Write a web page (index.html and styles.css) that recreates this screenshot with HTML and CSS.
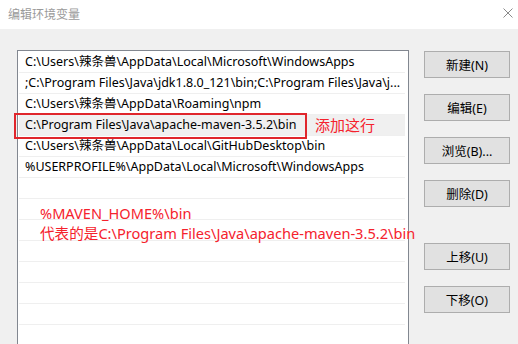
FILE: index.html
```html
<!DOCTYPE html>
<html lang="zh-CN">
<head>
  <meta charset="UTF-8">
  <title>编辑环境变量</title>
  <link rel="stylesheet" href="styles.css">
</head>
<body>
  <div class="titlebar">
    <span class="title">编辑环境变量</span>
    <svg class="close" width="10" height="10" viewBox="0 0 10 10">
      <path d="M0.5 0.5 L9.5 9.5 M9.5 0.5 L0.5 9.5" stroke="#8a8a8a" stroke-width="1" fill="none"/>
    </svg>
  </div>

  <div class="dialog">
    <div class="list">
      <div class="row">C:\Users\辣条兽\AppData\Local\Microsoft\WindowsApps</div>
      <div class="row">;C:\Program Files\Java\jdk1.8.0_121\bin;C:\Program Files\Java\j...</div>
      <div class="row">C:\Users\辣条兽\AppData\Roaming\npm</div>
      <div class="row selected">C:\Program Files\Java\apache-maven-3.5.2\bin</div>
      <div class="row">C:\Users\辣条兽\AppData\Local\GitHubDesktop\bin</div>
      <div class="row">%USERPROFILE%\AppData\Local\Microsoft\WindowsApps</div>
      <div class="row"></div>
      <div class="row"></div>
      <div class="row"></div>
      <div class="row"></div>
      <div class="row"></div>
      <div class="row"></div>
      <div class="row"></div>
      <div class="row"></div>
    </div>

    <div class="buttons">
      <button class="btn">新建(N)</button>
      <button class="btn">编辑(E)</button>
      <button class="btn">浏览(B)...</button>
      <button class="btn">删除(D)</button>
      <button class="btn gap">上移(U)</button>
      <button class="btn">下移(O)</button>
    </div>

    <!-- annotations -->
    <div class="mark-box"></div>
    <div class="mark-label">添加这行</div>
    <div class="mark-note">
      %MAVEN_HOME%\bin<br>
      代表的是C:\Program Files\Java\apache-maven-3.5.2\bin
    </div>
  </div>
</body>
</html>
```

FILE: styles.css
```css
html, body {
  margin: 0;
  padding: 0;
  width: 518px;
  height: 344px;
  overflow: hidden;
  background: #f0f0f0;
  font-family: "Noto Sans", "Noto Sans CJK SC", sans-serif;
  color: #000;
}

.titlebar {
  height: 29px;
  background: #fff;
  display: flex;
  align-items: center;
  justify-content: space-between;
  padding: 0 5px 3px 8px;
  box-sizing: border-box;
}

.title {
  font-family: "Noto Sans CJK SC", sans-serif;
  font-size: 12px;
  color: #9a9a9a;
}

.dialog {
  position: relative;
  display: flex;
  align-items: flex-start;
  padding: 21px 0 0 17px;
  height: 315px;
  box-sizing: border-box;
}

.list {
  width: 392px;
  height: 300px;
  box-sizing: border-box;
  background: #fff;
  border: 1px solid #828790;
  border-bottom: none;
  padding: 1px 3px 0 1px;
  overflow: hidden;
}

.row {
  height: 21px;
  line-height: 20px;
  border-bottom: 1px solid #efefef;
  box-sizing: border-box;
  padding-left: 6px;
  font-size: 12.5px;
  white-space: nowrap;
  overflow: hidden;
}

.row.selected {
  background: #f0f0f0;
}

.buttons {
  display: flex;
  flex-direction: column;
  gap: 16px;
  margin: 1px 0 0 15px;
}

.btn {
  width: 86px;
  height: 27px;
  background: #e1e1e1;
  border: 1px solid #adadad;
  font-family: "Noto Sans", "Noto Sans CJK SC", sans-serif;
  font-size: 12.5px;
  color: #000;
  padding: 0;
}

.btn.gap {
  margin-top: 20px;
}

.mark-box {
  position: absolute;
  left: 14px;
  top: 84px;
  width: 293px;
  height: 26px;
  border: 2px solid #e0262c;
  box-sizing: border-box;
}

.mark-label {
  position: absolute;
  left: 315px;
  top: 85px;
  font-family: "Noto Sans CJK SC", sans-serif;
  font-size: 15px;
  color: #f5222d;
}

.mark-note {
  position: absolute;
  left: 40px;
  top: 174px;
  font-size: 14.6px;
  line-height: 20px;
  color: #f5222d;
  white-space: nowrap;
}
```
